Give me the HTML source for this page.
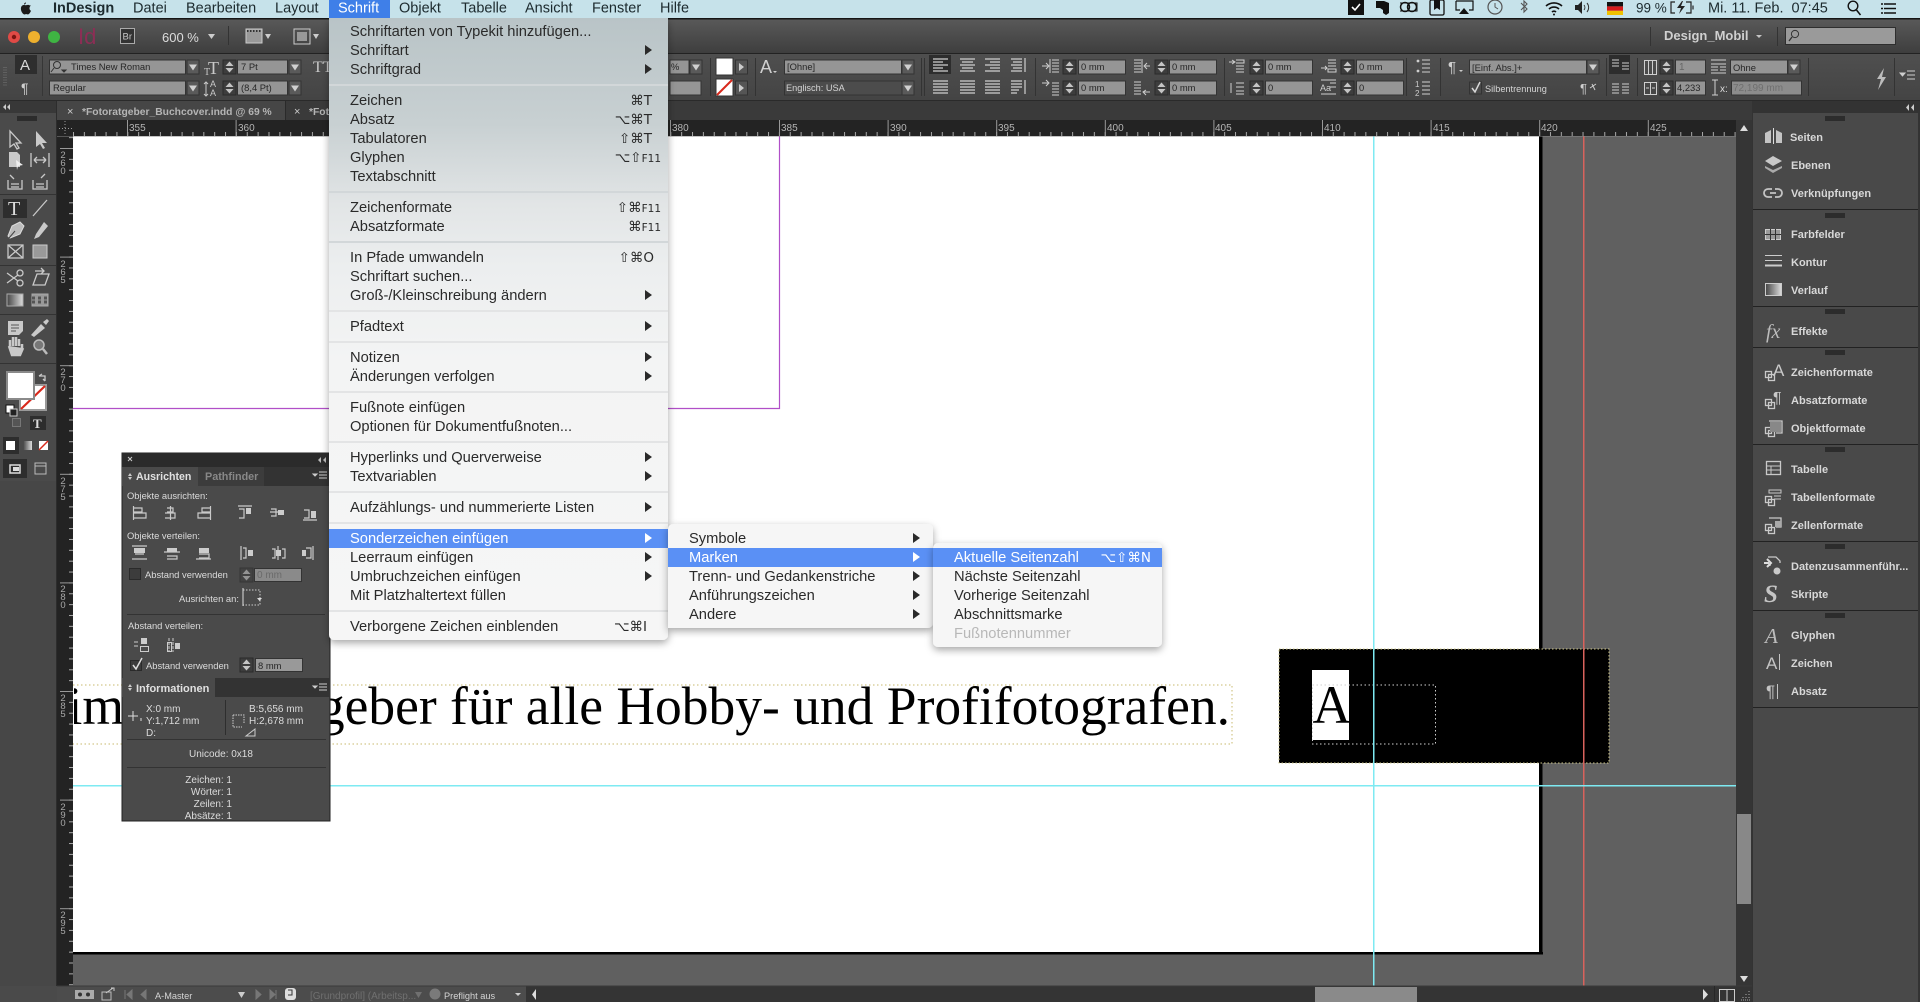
<!DOCTYPE html>
<html lang="de"><head><meta charset="utf-8"><title>InDesign</title>
<style>
html,body{margin:0;padding:0;background:#4a4a4a;overflow:hidden}
svg{display:block}
text{font-family:"Liberation Sans","DejaVu Sans",sans-serif}
.mb{font-size:14.5px;fill:#1c2a2e}
.m{font-size:14.7px;fill:#2a2a2a}
.w{font-size:14.7px;fill:#fff}
.k{font-size:13.5px;fill:#2a2a2a;text-anchor:end;font-family:"DejaVu Sans","Liberation Sans",sans-serif}
.c{font-size:9.4px;fill:#262626}
.l{font-size:10px;fill:#dcdcdc}
.l2{font-size:9.4px;fill:#dcdcdc}
.p{font-size:9.2px;fill:#d5d5d5}
.b{font-size:11px;font-weight:bold;fill:#d8d8d8}
.r{font-size:10px;fill:#b5b5b5}
.v{font-size:9.5px;fill:#a8a8a8;text-anchor:middle}
.ic{fill:none;stroke:#c9c9c9;stroke-width:1.3}
.if{fill:#c9c9c9}
.lh{stroke:#c9c9c9;stroke-width:1.2;fill:none}
</style></head>
<body>
<svg xmlns="http://www.w3.org/2000/svg" width="1920" height="1002" viewBox="0 0 1920 1002">
<defs>
<linearGradient id="gm" x1="0" y1="18" x2="0" y2="640" gradientUnits="userSpaceOnUse">
<stop offset="0" stop-color="#b9c4c7"/><stop offset=".17" stop-color="#c8d0d2"/><stop offset=".3" stop-color="#e2e5e6"/><stop offset=".4" stop-color="#eceeef"/><stop offset=".55" stop-color="#f3f4f4"/><stop offset="1" stop-color="#f6f6f6"/>
</linearGradient>
<linearGradient id="gt" x1="0" y1="0" x2="0" y2="1"><stop offset="0" stop-color="#5a5a5a"/><stop offset="1" stop-color="#3e3e3e"/></linearGradient>
<linearGradient id="gc" x1="0" y1="0" x2="0" y2="1"><stop offset="0" stop-color="#4f4f4f"/><stop offset="1" stop-color="#444"/></linearGradient>
<linearGradient id="gg" x1="0" y1="0" x2="1" y2="0"><stop offset="0" stop-color="#444"/><stop offset="1" stop-color="#ddd"/></linearGradient>
<filter id="sh" x="-10%" y="-10%" width="120%" height="120%"><feDropShadow dx="0" dy="3" stdDeviation="4" flood-color="#000" flood-opacity=".35"/></filter>
<pattern id="rh" x="73" y="120" width="10.86" height="16" patternUnits="userSpaceOnUse"><rect x="0" y="12" width="1" height="4" fill="#a8a8a8"/></pattern>
<pattern id="rv" x="58" y="148" width="15" height="10.86" patternUnits="userSpaceOnUse"><rect x="11" y="0" width="4" height="1" fill="#a8a8a8"/></pattern>
<g id="st"><rect width="13" height="14" fill="#3d3d3d" stroke="#2a2a2a"/><path d="M6.500 1.500l4 4.500h-8zM6.500 12.500l4-4.500h-8z" fill="#c4c4c4"/></g>
<g id="dd"><rect width="12" height="14" fill="#5a5a5a" stroke="#333"/><path d="M2 4.500h8l-4 6z" fill="#d0d0d0"/></g>
<g id="gr"><path d="M0 0v5M2 0v5M4 0v5M6 0v5M8 0v5M10 0v5M12 0v5M14 0v5M16 0v5M18 0v5" stroke="#151515" stroke-width="1.100"/></g>
<g id="al"><path d="M0 0h15M0 3h10M0 6h15M0 9h10M0 12h15" stroke="#cfcfcf" stroke-width="1.200"/></g>
<g id="al2"><path d="M0 0h15M0 3h15M0 6h15M0 9h15M0 12h15" stroke="#cfcfcf" stroke-width="1.200"/></g>
<g id="ml"><path d="M0 0h7M0 3h7M0 6h7M0 9h7M0 12h7" stroke="#cfcfcf"/></g>
</defs>

<!-- base -->
<rect width="1920" height="1002" fill="#4a4a4a"/>
<!-- top bands -->
<rect y="18" width="1920" height="35" fill="url(#gt)"/>
<rect y="18" width="1920" height="1.500" fill="#161616"/>
<rect y="53" width="1920" height="1" fill="#222"/>
<rect y="54" width="1920" height="46" fill="url(#gc)"/>
<rect y="100" width="1920" height="1" fill="#2a2a2a"/>
<rect y="101" width="1920" height="19" fill="#3a3a3a"/>

<!-- canvas -->
<rect x="57" y="120" width="1680" height="866" fill="#606060"/>
<rect x="73" y="136" width="1466" height="816" fill="#fff"/>
<rect x="1539" y="136" width="3.500" height="818" fill="#000"/>
<rect x="73" y="952" width="1470" height="2.500" fill="#000"/>

<!-- guides and lines -->
<path d="M779.500 136V408.500H73" fill="none" stroke="#b14fc8" stroke-width="1.200"/>

<!-- big text -->
<svg x="74" y="670" width="1200" height="80" viewBox="74 670 1200 80">
<text x="124" y="724" text-anchor="end" font-size="53.500" style="font-family:'Liberation Serif',serif" fill="#000">im</text>
<text x="1230" y="724" text-anchor="end" font-size="53.500" style="font-family:'Liberation Serif',serif" fill="#000">Fotoratgeber für alle Hobby- und Profifotografen.</text>
</svg>
<path d="M73 685H1232V744H73" fill="none" stroke="#c8ba6e" stroke-width="1" stroke-dasharray="1.500 2.500"/>

<!-- black frame -->
<rect x="1279" y="649" width="330" height="114" fill="#000"/>
<rect x="1279" y="649" width="330" height="114" fill="none" stroke="#cfc98a" stroke-width="1" stroke-dasharray="1.500 2"/>
<rect x="1312" y="670" width="37" height="70" fill="#fff"/>
<text x="1312.500" y="723" font-size="53.500" style="font-family:'Liberation Serif',serif" fill="#000">A</text>
<rect x="1312.500" y="685" width="123" height="59" fill="none" stroke="#cfcfcf" stroke-width="1" stroke-dasharray="1.500 2.500"/>

<rect x="1583" y="136" width="1.500" height="850" fill="#d8625c"/>
<rect x="1373" y="136" width="1.500" height="850" fill="#7eeaf2"/>
<rect x="73" y="785" width="1663" height="1.500" fill="#7eeaf2"/>

<!-- rulers -->
<rect x="57" y="120" width="1680" height="16" fill="#232323"/>
<rect x="73" y="120" width="1663" height="16" fill="url(#rh)"/>
<rect x="57" y="136" width="16" height="850" fill="#232323"/>
<rect x="58" y="136" width="15" height="850" fill="url(#rv)"/>
<rect x="57" y="136" width="1680" height="1" fill="#8a8a8a" opacity=".5"/>
<path d="M59 128.500h14M65 121v15" stroke="#999" stroke-dasharray="1 2"/>
<g fill="#9a9a9a">
<rect x="127" y="120" width="1" height="16"/><rect x="235.600" y="120" width="1" height="16"/><rect x="344.200" y="120" width="1" height="16"/><rect x="670" y="120" width="1" height="16"/><rect x="779" y="120" width="1" height="16"/><rect x="887.600" y="120" width="1" height="16"/><rect x="996.200" y="120" width="1" height="16"/><rect x="1104.800" y="120" width="1" height="16"/><rect x="1213.400" y="120" width="1" height="16"/><rect x="1322" y="120" width="1" height="16"/><rect x="1430.600" y="120" width="1" height="16"/><rect x="1539.200" y="120" width="1" height="16"/><rect x="1647.800" y="120" width="1" height="16"/>
<rect x="60" y="148" width="13" height="1"/><rect x="60" y="256.600" width="13" height="1"/><rect x="60" y="365.200" width="13" height="1"/><rect x="60" y="473.800" width="13" height="1"/><rect x="60" y="582.400" width="13" height="1"/><rect x="60" y="691" width="13" height="1"/><rect x="60" y="799.600" width="13" height="1"/><rect x="60" y="908.200" width="13" height="1"/>
</g>
<g>
<text class="r" x="129" y="131">355</text><text class="r" x="238" y="131">360</text><text class="r" x="672" y="131">380</text><text class="r" x="781" y="131">385</text><text class="r" x="890" y="131">390</text><text class="r" x="998" y="131">395</text><text class="r" x="1107" y="131">400</text><text class="r" x="1215" y="131">405</text><text class="r" x="1324" y="131">410</text><text class="r" x="1433" y="131">415</text><text class="r" x="1541" y="131">420</text><text class="r" x="1650" y="131">425</text>
</g>
<g>
<text class="v" x="63" y="158">2</text><text class="v" x="63" y="166">6</text><text class="v" x="63" y="174">0</text>
<text class="v" x="63" y="267">2</text><text class="v" x="63" y="275">6</text><text class="v" x="63" y="283">5</text>
<text class="v" x="63" y="375">2</text><text class="v" x="63" y="383">7</text><text class="v" x="63" y="391">0</text>
<text class="v" x="63" y="484">2</text><text class="v" x="63" y="492">7</text><text class="v" x="63" y="500">5</text>
<text class="v" x="63" y="592">2</text><text class="v" x="63" y="600">8</text><text class="v" x="63" y="608">0</text>
<text class="v" x="63" y="701">2</text><text class="v" x="63" y="709">8</text><text class="v" x="63" y="717">5</text>
<text class="v" x="63" y="810">2</text><text class="v" x="63" y="818">9</text><text class="v" x="63" y="826">0</text>
<text class="v" x="63" y="918">2</text><text class="v" x="63" y="926">9</text><text class="v" x="63" y="934">5</text>
</g>

<!-- tabs -->
<rect x="57" y="101" width="228" height="19" fill="#464646"/>
<rect x="285" y="101" width="1" height="19" fill="#2a2a2a"/>
<text x="67" y="115" font-size="11" fill="#ccc">×</text>
<text x="82" y="115" font-size="10.300" font-weight="bold" fill="#b5b5b5">*Fotoratgeber_Buchcover.indd @ 69 %</text>
<text x="294" y="115" font-size="11" fill="#ccc">×</text>
<text x="309" y="115" font-size="10.300" font-weight="bold" fill="#b5b5b5">*Fotoratgeber</text>

<!-- top strip controls -->
<circle cx="14" cy="37" r="6" fill="#e04a46"/><circle cx="14" cy="37" r="2.200" fill="#7a1512"/>
<circle cx="34" cy="37" r="6" fill="#eeb02e"/><circle cx="54" cy="37" r="6" fill="#3fb543"/>
<text x="78" y="44" font-size="22" fill="#8c2e55">Id</text>
<rect x="120.500" y="28.500" width="14" height="15" fill="#333" stroke="#aaa"/><text x="122.500" y="39.500" font-size="9.500" fill="#c8c8c8">Br</text>
<text x="162" y="42" font-size="13" fill="#dcdcdc">600 %</text>
<path d="M208 34h7l-3.500 5z" fill="#ccc"/>
<rect x="228" y="26" width="1" height="19" fill="#333"/>
<rect x="246" y="29" width="16" height="14" fill="#999" stroke="#ccc"/><path d="M247 31h14" stroke="#333" stroke-dasharray="1.500 1.500" stroke-width="2"/><path d="M265 34h6l-3 5z" fill="#ccc"/>
<rect x="294" y="29" width="16" height="15" fill="none" stroke="#ccc"/><rect x="297" y="32" width="10" height="9" fill="#999"/><path d="M313 34h6l-3 5z" fill="#ccc"/>

<!-- control row left -->
<path d="M4 67v20M6 67v20" stroke="#777" stroke-dasharray="1 1.500"/>
<rect x="15" y="55" width="22" height="19" fill="#2e2e2e"/>
<text x="20" y="70" font-size="15" fill="#d8d8d8">A</text>
<text x="21" y="93" font-size="14" fill="#cfcfcf">¶</text>
<rect x="42" y="56" width="1" height="40" fill="#363636"/>
<rect x="49.500" y="60" width="136" height="14" fill="#959595" stroke="#333"/>
<circle cx="57" cy="65" r="3.500" fill="none" stroke="#333"/><path d="M54 68l-3 4M62 70h4l-2 2z" stroke="#333" fill="#333"/>
<text x="71" y="70" class="c">Times New Roman</text>
<use href="#dd" x="187" y="60"/>
<rect x="49.500" y="81" width="136" height="14" fill="#959595" stroke="#333"/>
<text x="53" y="91" class="c">Regular</text>
<use href="#dd" x="187" y="81"/>
<text x="204" y="75" font-size="10" fill="#c9c9c9" style="font-family:'Liberation Serif',serif">T</text>
<text x="208" y="74" font-size="18" fill="#c9c9c9" style="font-family:'Liberation Serif',serif">T</text>
<text x="210" y="87" font-size="9" fill="#c9c9c9">A</text>
<text x="210" y="96" font-size="9" fill="#c9c9c9">A</text>
<path d="M206 82v14M204 84l2-2 2 2M204 94l2 2 2-2" stroke="#c9c9c9" fill="none"/>
<use href="#st" x="223" y="60"/><rect x="237.500" y="60" width="50" height="14" fill="#959595" stroke="#333"/><text x="241" y="70" class="c">7 Pt</text><use href="#dd" x="289" y="60"/>
<use href="#st" x="223" y="81"/><rect x="237.500" y="81" width="50" height="14" fill="#959595" stroke="#333"/><text x="241" y="91" class="c">(8,4 Pt)</text><use href="#dd" x="289" y="81"/>
<text x="313" y="72" font-size="16" fill="#c9c9c9" style="font-family:'Liberation Serif',serif">TT</text>

<!-- control middle -->
<rect x="670" y="60" width="19" height="14" fill="#959595" stroke="#333"/><text x="671" y="70" class="c">%</text><use href="#dd" x="690" y="60"/>
<rect x="670" y="81" width="31" height="14" fill="#959595" stroke="#333"/>
<rect x="710" y="58" width="1" height="38" fill="#333"/>
<rect x="716" y="58" width="17" height="17" fill="#fff" stroke="#333"/>
<rect x="735.500" y="60" width="12" height="14" fill="#555" stroke="#333"/><path d="M739 63v8l5-4z" fill="#ccc"/>
<rect x="716" y="79" width="17" height="17" fill="#fff" stroke="#333"/><path d="M717 95l15-15" stroke="#d8291c" stroke-width="2"/>
<rect x="735.500" y="81" width="12" height="14" fill="#555" stroke="#333"/><path d="M739 84v8l5-4z" fill="#ccc"/>
<rect x="755" y="58" width="1" height="38" fill="#333"/>
<text x="760" y="73" font-size="18" fill="#cfcfcf">A</text><path d="M773 71h4l-2 2z" fill="#ccc"/>
<rect x="784.500" y="60" width="117" height="14" fill="#959595" stroke="#333"/><text x="787" y="70" class="c">[Ohne]</text><use href="#dd" x="902" y="60"/>
<rect x="784.500" y="81" width="129" height="14" fill="#4c4c4c" stroke="#333"/><text x="786" y="91" class="p">Englisch: USA</text><use href="#dd" x="902" y="81"/>
<rect x="921" y="58" width="1" height="38" fill="#333"/><rect x="924" y="58" width="1" height="38" fill="#333"/>
<rect x="929" y="55" width="22" height="19" fill="#2d2d2d"/>
<use href="#al" x="933" y="59"/>
<path d="M960 59h15M962 62h11M960 65h15M962 68h11M960 71h15" stroke="#cfcfcf" stroke-width="1.200"/>
<path d="M985 59h15M990 62h10M985 65h15M990 68h10M985 71h15" stroke="#cfcfcf" stroke-width="1.200"/>
<path d="M1011 59h11M1013 62h9M1011 65h11M1013 68h9M1011 71h11M1025 58v14" stroke="#cfcfcf" stroke-width="1.200"/>
<use href="#al2" x="933" y="81"/><use href="#al2" x="960" y="81"/><use href="#al2" x="985" y="81"/>
<path d="M1011 81h11M1011 84h11M1011 87h11M1011 90h8M1011 93h6M1025 80v14" stroke="#cfcfcf" stroke-width="1.200"/>
<rect x="1035" y="58" width="1" height="38" fill="#333"/>

<path d="M1042 66h6M1046 63l3 3-3 3M1050 59v14" stroke="#cfcfcf" fill="none"/><use href="#ml" x="1052" y="60"/>
<path d="M1042 83h6M1046 80l3 3-3 3" stroke="#cfcfcf" fill="none"/><use href="#ml" x="1052" y="83"/>
<use href="#st" x="1063" y="60"/><rect x="1078.500" y="60" width="47" height="14" fill="#959595" stroke="#333"/><text x="1081" y="70" class="c">0 mm</text>
<use href="#st" x="1063" y="81"/><rect x="1078.500" y="81" width="47" height="14" fill="#959595" stroke="#333"/><text x="1081" y="91" class="c">0 mm</text>
<use href="#ml" x="1134" y="60"/><path d="M1142 59v14M1150 66h-5M1147 63l-3 3 3 3" stroke="#cfcfcf" fill="none"/>
<use href="#ml" x="1134" y="82"/><path d="M1150 92h-6M1146 90l-3 2 3 3" stroke="#cfcfcf" fill="none"/>
<use href="#st" x="1155" y="60"/><rect x="1169.500" y="60" width="47" height="14" fill="#959595" stroke="#333"/><text x="1172" y="70" class="c">0 mm</text>
<use href="#st" x="1155" y="81"/><rect x="1169.500" y="81" width="47" height="14" fill="#959595" stroke="#333"/><text x="1172" y="91" class="c">0 mm</text>
<rect x="1224" y="58" width="1" height="38" fill="#333"/>
<path d="M1229 62h5M1232 60l3 2-3 2M1236 60h8v3h-8M1236 66h8M1236 69h8M1236 72h8" stroke="#cfcfcf" fill="none"/>
<path d="M1231 83v10M1236 83h8M1236 87h8M1236 91h8M1236 94h8" stroke="#cfcfcf" fill="none"/>
<use href="#st" x="1250" y="60"/><rect x="1265.500" y="60" width="47" height="14" fill="#959595" stroke="#333"/><text x="1268" y="70" class="c">0 mm</text>
<use href="#st" x="1250" y="81"/><rect x="1265.500" y="81" width="47" height="14" fill="#959595" stroke="#333"/><text x="1268" y="91" class="c">0</text>
<path d="M1321 68h6M1325 66l2 2-2 2M1328 60h8M1328 63h8M1328 66h8M1328 69h8v3h-8z" stroke="#cfcfcf" fill="none"/>
<text x="1320" y="91" font-size="9" fill="#cfcfcf">Aa</text><path d="M1321 80h15M1330 83h6M1330 87h6M1321 94h15" stroke="#cfcfcf"/>
<use href="#st" x="1341" y="60"/><rect x="1356.500" y="60" width="47" height="14" fill="#959595" stroke="#333"/><text x="1359" y="70" class="c">0 mm</text>
<use href="#st" x="1341" y="81"/><rect x="1356.500" y="81" width="47" height="14" fill="#959595" stroke="#333"/><text x="1359" y="91" class="c">0</text>
<rect x="1406" y="58" width="1" height="38" fill="#333"/>
<path d="M1422 60h8M1422 64h8M1422 68h8M1422 72h8" stroke="#cfcfcf"/><circle cx="1418" cy="61" r="1.400" fill="#cfcfcf"/><circle cx="1418" cy="71" r="1.400" fill="#cfcfcf"/>
<text x="1415" y="87" font-size="8" fill="#cfcfcf">1</text><text x="1415" y="96" font-size="8" fill="#cfcfcf">2</text>
<path d="M1422 82h8M1422 86h8M1422 90h8M1422 94h8" stroke="#cfcfcf"/>
<rect x="1440" y="58" width="1" height="38" fill="#333"/>
<text x="1448" y="72" font-size="15" fill="#cfcfcf">¶</text><path d="M1459 70h4l-2 2z" fill="#ccc"/>
<rect x="1469.500" y="60" width="117" height="14" fill="#959595" stroke="#333"/><text x="1472" y="71" class="c">[Einf. Abs.]+</text><use href="#dd" x="1587" y="60"/>
<rect x="1469.500" y="82" width="12" height="12" fill="#4a4a4a" stroke="#333"/><path d="M1472 88l3 4 5-10" stroke="#d8d8d8" stroke-width="1.500" fill="none"/>
<text x="1485" y="92" class="p">Silbentrennung</text>
<text x="1580" y="93" font-size="13" fill="#cfcfcf">¶</text><path d="M1590 88l6-4M1592 84l3 6" stroke="#cfcfcf"/>
<rect x="1606" y="58" width="1" height="38" fill="#333"/>
<rect x="1609" y="55" width="21" height="19" fill="#2d2d2d"/>
<path d="M1612 60h7M1612 63h7M1612 66h7M1622 63h7M1622 66h7M1622 69h7" stroke="#cfcfcf"/>
<path d="M1612 84h7M1612 87h7M1612 90h7M1612 93h7M1622 84h7M1622 87h7M1622 90h7M1622 93h7" stroke="#cfcfcf"/>
<rect x="1637" y="58" width="1" height="38" fill="#333"/>
<rect x="1644.500" y="60.500" width="12" height="14" fill="none" stroke="#cfcfcf"/><path d="M1648.500 60v14M1652.500 60v14" stroke="#cfcfcf"/>
<rect x="1644.500" y="82.500" width="12" height="12" fill="none" stroke="#cfcfcf"/><path d="M1650.500 82v12M1646 88h3M1652 88h3" stroke="#cfcfcf"/>
<use href="#st" x="1660" y="60"/><rect x="1675.500" y="60" width="30" height="14" fill="#959595" stroke="#333"/><text x="1679" y="70" font-size="10" fill="#666">1</text>
<use href="#st" x="1660" y="81"/><rect x="1675.500" y="81" width="30" height="14" fill="#959595" stroke="#333"/><text x="1677" y="91" class="c">4,233</text>
<path d="M1711 60h15M1711 64h15M1711 67h7M1720 67h6M1711 70h7M1720 70h6M1711 73h15" stroke="#cfcfcf"/>
<path d="M1712 80h6M1715 80v15M1712 95h6" stroke="#cfcfcf" fill="none"/><text x="1720" y="92" class="l">x:</text>
<rect x="1730.500" y="60" width="57" height="14" fill="#959595" stroke="#333"/><text x="1733" y="71" class="c">Ohne</text><use href="#dd" x="1788" y="60"/>
<rect x="1731.500" y="81" width="70" height="14" fill="#8c8c8c" stroke="#333"/><text x="1733" y="91" font-size="10" fill="#6f6f6f">72,199 mm</text>
<rect x="1808" y="58" width="1" height="38" fill="#333"/>
<path d="M1884 68l-7 11h4l-3 11 8-13h-4z" fill="#bcbcbc"/>
<rect x="1894" y="58" width="1" height="38" fill="#333"/>
<path d="M1900 73h5l-2.500 3zM1907 71h8M1907 75h8M1907 79h8" stroke="#cfcfcf" fill="#cfcfcf"/>

<!-- workspace -->
<rect x="1650" y="27" width="1" height="19" fill="#333"/>
<text x="1664" y="40" font-size="13" font-weight="bold" fill="#d0d0d0">Design_Mobil</text>
<path d="M1756 35h6l-3 3z" fill="#c5c5c5"/>
<rect x="1777" y="27" width="1" height="19" fill="#333"/>
<rect x="1785.500" y="27.500" width="110" height="17" fill="#9a9a9a" stroke="#2e2e2e"/>
<circle cx="1795" cy="34" r="3.600" fill="none" stroke="#333"/><path d="M1792 37l-3 4" stroke="#333" stroke-width="1.300"/>

<!-- tool panel -->
<rect x="0" y="113" width="56" height="368" fill="#4a4a4a"/>
<rect x="0" y="101" width="57" height="12" fill="#383838"/>
<rect x="56" y="101" width="1" height="885" fill="#2d2d2d"/>
<rect x="0" y="481" width="56" height="505" fill="#474747"/>
<path d="M6 104l-3 3 3 3zM10 104l-3 3 3 3z" fill="#ccc"/>
<use href="#gr" x="18" y="116"/>
<path d="M10 131v16l4-3 3 5 2-1-3-5h5z" class="ic"/><path d="M36 131v16l4-3 3 5 2-1-3-5h5z" class="if"/>
<path d="M9 152h8l3 3v12h-11z" class="if"/><path d="M16 160l7 5-5 1 -1 4z" fill="#eee"/>
<path d="M31 153v14M49 153v14M34 160h12M34 160l3-3M34 160l3 3M46 160l-3-3M46 160l-3 3" class="ic"/>
<path d="M8 180v9h14v-9M11 184h8M11 187h8M10 175l4 4" class="ic"/><path d="M33 180v9h14v-9M36 184h8M36 187h8M45 174l-4 4" class="ic"/>
<rect x="0" y="194" width="56" height="1" fill="#333"/>
<rect x="3" y="199" width="24" height="19" fill="#2d2d2d"/>
<text x="8" y="215" font-size="20" fill="#ddd" style="font-family:'Liberation Serif',serif">T</text>
<path d="M33 216l14-16" class="ic"/>
<path d="M20 222l4 4-4 8-10 4-2-2 4-10z" fill="#bcbcbc" stroke="#ddd"/><path d="M9 238l6-7" stroke="#444"/>
<path d="M44 222l4 4-9 11-5 2 2-5z" class="if"/>
<rect x="8" y="245" width="15" height="13" class="ic"/><path d="M8 245l15 13M23 245l-15 13" class="ic"/>
<rect x="33" y="245" width="14" height="13" fill="#999" stroke="#ccc"/>
<rect x="0" y="265" width="56" height="1" fill="#333"/>
<circle cx="20" cy="273" r="3" class="ic"/><circle cx="20" cy="283" r="3" class="ic"/><path d="M7 273l11 8M7 283l11-8" class="ic"/>
<path d="M33 285l4-11h12l-4 11zM35 271h9M41 268l3 3-3 3" class="ic"/>
<rect x="7" y="294" width="16" height="12" fill="url(#gg)" stroke="#aaa"/>
<rect x="32" y="294" width="16" height="12" fill="#999" stroke="#aaa"/><path d="M32 298h16M32 302h16" stroke="#555" stroke-dasharray="3 3" stroke-width="3"/>
<rect x="0" y="314" width="56" height="1" fill="#333"/>
<path d="M8 321h15v10l-4 4h-11z" class="if"/><path d="M11 325h8M11 328h8M11 331h5" stroke="#555"/>
<path d="M31 335l10-11 4 4-11 9zM43 322l4-3 2 2-3 4" class="if"/>
<path d="M10 346v-6M13 346v-9M16 346v-9M19 346v-7M22 349v-5M9 346l3 9h8l3-7" stroke="#c9c9c9" stroke-width="2.500" fill="#c9c9c9"/>
<circle cx="39" cy="345" r="5" fill="#777" stroke="#bbb" stroke-width="1.500"/><path d="M43 349l4 5" stroke="#bbb" stroke-width="2.500"/>
<rect x="0" y="363" width="56" height="1" fill="#333"/>
<rect x="20" y="385" width="26" height="25" fill="#fff" stroke="#999" stroke-width="2"/><path d="M21 409l24-23" stroke="#d8291c" stroke-width="2.200"/>
<rect x="7" y="372" width="27" height="27" fill="#fff" stroke="#8a8a8a" stroke-width="2"/>
<path d="M39 376h6v5M39 376l3-2M45 381l-2-2" class="ic"/>
<rect x="6" y="405" width="8" height="8" fill="#fff" stroke="#111"/><rect x="10" y="409" width="7" height="7" fill="#222" stroke="#ccc"/>
<rect x="12.500" y="418.500" width="8" height="8" fill="#555" stroke="#777"/>
<rect x="30" y="416" width="16" height="14" fill="#2d2d2d"/><text x="33" y="428" font-size="13" font-weight="bold" fill="#ddd" style="font-family:'Liberation Serif',serif">T</text>
<rect x="3" y="437" width="16" height="17" fill="#2d2d2d"/><rect x="6" y="441" width="9" height="9" fill="#fff"/>
<rect x="23" y="441" width="9" height="9" fill="url(#gg)"/>
<rect x="39" y="441" width="9" height="9" fill="#fff"/><path d="M39 450l9-9" stroke="#d8291c" stroke-width="1.500"/>
<rect x="3" y="459" width="24" height="19" fill="#2d2d2d"/><rect x="10" y="465" width="10" height="8" fill="none" stroke="#ddd" stroke-width="1.500"/><rect x="13" y="467" width="6" height="4" fill="#ddd"/>
<rect x="35" y="463" width="11" height="11" fill="none" stroke="#bbb"/><path d="M35 466h11" stroke="#bbb"/>

<!-- vertical scrollbar -->
<rect x="1736" y="120" width="16" height="866" fill="#353535"/>
<rect x="1737" y="814" width="14" height="90" fill="#888"/>
<path d="M1744 125l4 6h-8z" fill="#ddd"/><path d="M1740 976h8l-4 6z" fill="#ddd"/>

<!-- status bar -->
<rect x="57" y="986" width="469" height="16" fill="#4c4c4c"/>
<rect x="526" y="986" width="1226" height="16" fill="#343434"/>
<rect x="57" y="985.500" width="1695" height="1" fill="#3a3a3a"/>
<rect x="75" y="990" width="19" height="9" fill="#aaa"/><circle cx="80" cy="994.500" r="2" fill="#333"/><circle cx="88" cy="994.500" r="2" fill="#333"/>
<rect x="102" y="992" width="9" height="8" fill="none" stroke="#bbb"/><path d="M106 993l7-5M111 988h3v3" stroke="#ccc" fill="none"/>
<path d="M125 990v9M132 990v9l-5-4.500zM146 990v9l-5-4.500z" stroke="#777" fill="#777"/>
<text x="155" y="999" class="p">A-Master</text>
<path d="M238 992h7l-3.500 6z" fill="#ccc"/>
<path d="M256 990v9l5-4.500zM270 990v9l5-4.500zM276 990v9" stroke="#777" fill="#777"/>
<rect x="285" y="988" width="11" height="12" rx="3" fill="#ddd"/><path d="M288 990h4v5h-4" stroke="#333" fill="none"/>
<text x="310" y="999" font-size="10" fill="#707070">[Grundprofil] (Arbeitsp...</text>
<path d="M415 992h7l-3.500 6z" fill="#707070"/>
<circle cx="435" cy="994" r="5.500" fill="#7a7a7a"/>
<text x="444" y="999" class="p">Preflight aus</text>
<path d="M515 993h6l-3 3z" fill="#ccc"/>
<path d="M536 989v11l-4-5.500z" fill="#ddd"/>
<rect x="1315" y="987" width="102" height="15" fill="#8a8a8a"/>
<path d="M1703 989v11l5-5.500z" fill="#ddd"/>
<rect x="1714" y="986" width="1" height="16" fill="#272727"/>
<rect x="1719.500" y="989.500" width="15" height="12" fill="none" stroke="#ccc"/><path d="M1727 989v12" stroke="#ccc"/>
<path d="M1749 991v1M1746 994v1M1749 994v1M1743 997v1M1746 997v1M1749 997v1M1741 1000h9" stroke="#aaa" stroke-dasharray="1 1"/>

<!-- right panel -->
<rect x="1752" y="101" width="168" height="901" fill="#333"/>
<rect x="1753" y="113" width="165" height="889" fill="#494949"/>
<path d="M1914 104l-3 3.500 3 3.500zM1909 104l-3 3.500 3 3.500z" fill="#ccc"/>
<g fill="#222">
<rect x="1753" y="209" width="165" height="1"/><rect x="1753" y="306" width="165" height="1"/><rect x="1753" y="347" width="165" height="1"/><rect x="1753" y="444" width="165" height="1"/><rect x="1753" y="541" width="165" height="1"/><rect x="1753" y="610" width="165" height="1"/><rect x="1753" y="707" width="165" height="1"/>
</g>
<use href="#gr" x="1826" y="116"/><use href="#gr" x="1826" y="213"/><use href="#gr" x="1826" y="309"/><use href="#gr" x="1826" y="350"/><use href="#gr" x="1826" y="447"/><use href="#gr" x="1826" y="544"/><use href="#gr" x="1826" y="613"/>
<text class="b" x="1790" y="141">Seiten</text><text class="b" x="1791" y="169">Ebenen</text><text class="b" x="1791" y="197">Verknüpfungen</text>
<text class="b" x="1791" y="238">Farbfelder</text><text class="b" x="1791" y="266">Kontur</text><text class="b" x="1791" y="294">Verlauf</text>
<text class="b" x="1791" y="335">Effekte</text>
<text class="b" x="1791" y="376">Zeichenformate</text><text class="b" x="1791" y="404">Absatzformate</text><text class="b" x="1791" y="432">Objektformate</text>
<text class="b" x="1791" y="473">Tabelle</text><text class="b" x="1791" y="501">Tabellenformate</text><text class="b" x="1791" y="529">Zellenformate</text>
<text class="b" x="1791" y="570">Datenzusammenführ...</text><text class="b" x="1791" y="598">Skripte</text>
<text class="b" x="1791" y="639">Glyphen</text><text class="b" x="1791" y="667">Zeichen</text><text class="b" x="1791" y="695">Absatz</text>
<!-- right icons -->
<path d="M1765 133l6-3v13h-6zM1782 133l-6-3v13h6z" fill="#c4c4c4"/><path d="M1773.500 128v16" stroke="#ddd"/>
<path d="M1773 156l9 5-9 5-8-5z" class="if"/><path d="M1765 166l8 4 9-4 0 2-9 5-8-5z" fill="#aaa"/>
<path d="M1772 189h-4a4 4 0 0 0 0 8h4M1775 189h3a4 4 0 0 1 0 8h-3M1770 193h6" fill="none" stroke="#c4c4c4" stroke-width="1.800"/>
<rect x="1765.500" y="229.500" width="15" height="10" fill="#999" stroke="#ccc"/><path d="M1770.500 229v11M1775.500 229v11M1765 234.500h16" stroke="#333"/>
<path d="M1765 255.500h17M1765 260.500h17" stroke="#ccc"/><path d="M1765 265.500h17" stroke="#ccc" stroke-width="2"/>
<rect x="1765.500" y="283.500" width="16" height="12" fill="url(#gg)" stroke="#ccc"/>
<text x="1766" y="338" font-size="20" font-style="italic" fill="#bcbcbc" style="font-family:'Liberation Serif',serif">fx</text>
<rect x="1765.500" y="371.500" width="6" height="6" class="ic"/><rect x="1768.500" y="374.500" width="6" height="6" class="ic"/><text x="1773" y="376" font-size="17" fill="#c9c9c9">A</text>
<rect x="1765.500" y="399.500" width="6" height="6" class="ic"/><rect x="1768.500" y="402.500" width="6" height="6" class="ic"/><text x="1773" y="403" font-size="16" fill="#c9c9c9">¶</text>
<rect x="1765.500" y="427.500" width="6" height="6" class="ic"/><rect x="1768.500" y="430.500" width="6" height="6" class="ic"/><path d="M1769 421h13v12h-6" class="ic"/><rect x="1770" y="422" width="11" height="10" fill="#888"/>
<rect x="1766.500" y="461.500" width="14" height="13" class="ic"/><path d="M1766 466h15M1766 470h15M1771 466v9" stroke="#c9c9c9"/>
<rect x="1765.500" y="496.500" width="6" height="6" class="ic"/><rect x="1768.500" y="499.500" width="6" height="6" class="ic"/><path d="M1769 490h12v3h-12zM1774 496h7M1774 499h7" stroke="#c9c9c9" fill="none"/>
<rect x="1765.500" y="524.500" width="6" height="6" class="ic"/><rect x="1768.500" y="527.500" width="6" height="6" class="ic"/><path d="M1769 518h12v9h-5" class="ic"/><rect x="1775" y="521" width="6" height="6" fill="#aaa"/>
<path d="M1768 557h8l4 4v2M1770 566v-3" class="ic"/><path d="M1764 563h5M1767 559l4 4-4 4" stroke="#ddd" stroke-width="2" fill="none"/><circle cx="1777" cy="571" r="3.500" fill="#c9c9c9"/>
<text x="1764" y="602" font-size="25" font-weight="bold" font-style="italic" fill="#c4c4c4" style="font-family:'Liberation Serif',serif">S</text>
<text x="1765" y="643" font-size="21" font-style="italic" fill="#bcbcbc" style="font-family:'Liberation Serif',serif">A</text>
<text x="1766" y="669" font-size="17" fill="#c4c4c4">A</text><path d="M1779.500 654v16" stroke="#c4c4c4"/>
<text x="1766" y="697" font-size="17" fill="#c4c4c4">¶</text><path d="M1777.500 684v15" stroke="#c4c4c4"/>

<!-- floating panel -->
<rect x="122" y="453" width="208" height="368" fill="#4a4a4a" stroke="#222"/>
<rect x="122" y="453" width="208" height="14" fill="#2b2b2b"/>
<path d="M128 457l4 4M132 457l-4 4" stroke="#ccc"/>
<path d="M321 457l-3 3 3 3zM326 457l-3 3 3 3z" fill="#bbb"/>
<rect x="122" y="467" width="208" height="19" fill="#333"/>
<rect x="122" y="467" width="76" height="19" fill="#4a4a4a"/>
<rect x="198" y="467" width="66" height="19" fill="#3c3c3c"/>
<path d="M130 473l-2 3h4zM130 480l-2-3h4z" fill="#ccc"/>
<text x="136" y="480" font-size="10.600" font-weight="bold" fill="#e0e0e0">Ausrichten</text>
<text x="205" y="480" font-size="10.800" font-weight="bold" fill="#888">Pathfinder</text>
<path d="M313 474h4l-2 2zM319 472h8M319 475h8M319 478h8" stroke="#ccc" fill="#ccc"/>
<text class="l2" x="127" y="499">Objekte ausrichten:</text>
<path d="M133.500 506v14M134 508h8v4h-8M134 513h12v5h-12M167 508h6v4h-6M165 513h10v5h-10M170.500 506v14M210 508h-8v4h8M210 513h-12v5h12M210.500 506v14" class="lh"/>
<path d="M238 506h14M239 509h5v9h-5" class="lh"/><rect x="246" y="508" width="5" height="6" fill="#ccc"/>
<path d="M270 512h14M271 509h5v7h-5" class="lh"/><rect x="278" y="510" width="6" height="5" fill="#ccc"/>
<path d="M303 520h14M304 510h5v8h-5" class="lh"/><rect x="311" y="511" width="5" height="7" fill="#ccc"/>
<text class="l2" x="127" y="539">Objekte verteilen:</text>
<path d="M132 546h15M132 559h15M135 554h9" class="lh"/><rect x="134" y="548" width="11" height="5" fill="#ccc"/>
<path d="M164 552h16M167 556h10v3h-10" class="lh"/><rect x="167" y="548" width="10" height="4" fill="#ccc"/>
<path d="M196 559h15M199 554h10v4h-10" class="lh"/><rect x="199" y="548" width="10" height="5" fill="#ccc"/>
<path d="M241 546v14M243 548h3v10h-3" class="lh"/><rect x="248" y="550" width="5" height="6" fill="#ccc"/>
<path d="M278 546v14M272 549h3v9h-3M282 549h3v9h-3" class="lh"/><rect x="276" y="550" width="5" height="6" fill="#ccc"/>
<path d="M313 546v14M306 548h5v10h-5" class="lh"/><rect x="302" y="550" width="4" height="6" fill="#ccc"/>
<rect x="129.500" y="568.500" width="11" height="11" fill="#3c3c3c" stroke="#2a2a2a"/>
<text class="l2" x="145" y="578">Abstand verwenden</text>
<use href="#st" x="240" y="568" opacity=".6"/><rect x="254.500" y="568.500" width="47" height="13" fill="#8a8a8a" stroke="#333"/><text x="257" y="578" font-size="10" fill="#6a6a6a">0 mm</text>
<text class="l2" x="179" y="602">Ausrichten an:</text>
<rect x="243" y="590" width="17" height="15" fill="none" stroke="#ccc" stroke-dasharray="1.500 1.500"/><path d="M243 588v18" stroke="#ddd"/><path d="M257 598h5l-2.500 3z" fill="#ddd"/>
<rect x="127" y="614" width="198" height="1" fill="#333"/>
<text class="l2" x="128" y="629">Abstand verteilen:</text>
<path d="M134 642h4M134 646h4" stroke="#ccc"/><rect x="141" y="638" width="6" height="6" fill="#ccc"/><rect x="140.500" y="646.500" width="8" height="5" fill="none" stroke="#ccc"/>
<path d="M169 638v14M173 638v14" stroke="#ccc" stroke-dasharray="3 1"/><rect x="167.500" y="642.500" width="4" height="9" fill="none" stroke="#ccc"/><rect x="175" y="643" width="5" height="6" fill="#ccc"/>
<rect x="130.500" y="660.500" width="11" height="10" fill="#3c3c3c" stroke="#2a2a2a"/><path d="M133 665l3 4 6-11" stroke="#ddd" stroke-width="1.500" fill="none"/>
<text class="l2" x="146" y="669">Abstand verwenden</text>
<use href="#st" x="240" y="658"/><rect x="255.500" y="658.500" width="47" height="13" fill="#999" stroke="#333"/><text x="258" y="669" class="c">8 mm</text>
<rect x="122" y="678" width="208" height="19" fill="#333"/>
<rect x="122" y="678" width="93" height="19" fill="#4a4a4a"/>
<path d="M130 684l-2 3h4zM130 691l-2-3h4z" fill="#ccc"/>
<text x="136" y="692" font-size="11" font-weight="bold" fill="#e0e0e0">Informationen</text>
<path d="M313 686h4l-2 2zM319 684h8M319 687h8M319 690h8" stroke="#ccc" fill="#ccc"/>
<path d="M133 711v10M128 716h10" stroke="#ddd"/><path d="M141 718v3" stroke="#ddd"/>
<text class="l" x="146" y="712">X:0 mm</text><text class="l" x="146" y="724">Y:1,712 mm</text><text class="l" x="146" y="736">D:</text>
<rect x="225" y="700" width="1" height="35" fill="#2e2e2e"/>
<path d="M233 715h11v9M233 715v12h9" fill="none" stroke="#ccc" stroke-dasharray="1.500 1"/>
<text class="l" x="249" y="712">B:5,656 mm</text><text class="l" x="249" y="724">H:2,678 mm</text>
<path d="M246 736l9-7v7z" fill="none" stroke="#ccc"/>
<rect x="127" y="739" width="199" height="1" fill="#333"/>
<text class="l" x="189" y="757">Unicode: 0x18</text>
<rect x="127" y="767" width="199" height="1" fill="#333"/>
<g text-anchor="end"><text class="l" x="232" y="783">Zeichen: 1</text><text class="l" x="232" y="795">Wörter: 1</text><text class="l" x="232" y="807">Zeilen: 1</text><text class="l" x="232" y="819">Absätze: 1</text></g>

<!-- main menu -->
<path d="M329 18H668V635a5 5 0 0 1-5 5H334a5 5 0 0 1-5-5Z" fill="url(#gm)" filter="url(#sh)"/>
<g fill="#d2d7d9">
<rect x="329" y="84" width="339" height="2"/><rect x="329" y="191" width="339" height="2"/><rect x="329" y="241" width="339" height="2"/>
<rect x="329" y="310" width="339" height="2" fill="#e3e4e5"/><rect x="329" y="341" width="339" height="2" fill="#e3e4e5"/><rect x="329" y="391" width="339" height="2" fill="#e3e4e5"/><rect x="329" y="441" width="339" height="2" fill="#e3e4e5"/><rect x="329" y="491" width="339" height="2" fill="#e3e4e5"/><rect x="329" y="522" width="339" height="2" fill="#e3e4e5"/><rect x="329" y="610" width="339" height="2" fill="#e3e4e5"/>
</g>
<rect x="329" y="529" width="339" height="19" fill="#5a90f5"/>
<g>
<text class="m" x="350" y="36">Schriftarten von Typekit hinzufügen...</text>
<text class="m" x="350" y="55">Schriftart</text>
<text class="m" x="350" y="74">Schriftgrad</text>
<text class="m" x="350" y="105">Zeichen</text>
<text class="m" x="350" y="124">Absatz</text>
<text class="m" x="350" y="143">Tabulatoren</text>
<text class="m" x="350" y="162">Glyphen</text>
<text class="m" x="350" y="181">Textabschnitt</text>
<text class="m" x="350" y="212">Zeichenformate</text>
<text class="m" x="350" y="231">Absatzformate</text>
<text class="m" x="350" y="262">In Pfade umwandeln</text>
<text class="m" x="350" y="281">Schriftart suchen...</text>
<text class="m" x="350" y="300">Groß-/Kleinschreibung ändern</text>
<text class="m" x="350" y="331">Pfadtext</text>
<text class="m" x="350" y="362">Notizen</text>
<text class="m" x="350" y="381">Änderungen verfolgen</text>
<text class="m" x="350" y="412">Fußnote einfügen</text>
<text class="m" x="350" y="431">Optionen für Dokumentfußnoten...</text>
<text class="m" x="350" y="462">Hyperlinks und Querverweise</text>
<text class="m" x="350" y="481">Textvariablen</text>
<text class="m" x="350" y="512">Aufzählungs- und nummerierte Listen</text>
<text class="w" x="350" y="543">Sonderzeichen einfügen</text>
<text class="m" x="350" y="562">Leerraum einfügen</text>
<text class="m" x="350" y="581">Umbruchzeichen einfügen</text>
<text class="m" x="350" y="600">Mit Platzhaltertext füllen</text>
<text class="m" x="350" y="631">Verborgene Zeichen einblenden</text>
</g>
<g>
<text class="k" x="652" y="105">⌘T</text>
<text class="k" x="652" y="124">⌥⌘T</text>
<text class="k" x="652" y="143">⇧⌘T</text>
<text class="k" x="661" y="162">⌥⇧<tspan font-size="10.500">F11</tspan></text>
<text class="k" x="661" y="212">⇧⌘<tspan font-size="10.500">F11</tspan></text>
<text class="k" x="661" y="231">⌘<tspan font-size="10.500">F11</tspan></text>
<text class="k" x="654" y="262">⇧⌘O</text>
<text class="k" x="647" y="631">⌥⌘I</text>
</g>
<g fill="#2a2a2a">
<path d="M645 45l7 5-7 5zM645 64l7 5-7 5zM645 290l7 5-7 5zM645 321l7 5-7 5zM645 352l7 5-7 5zM645 371l7 5-7 5zM645 452l7 5-7 5zM645 471l7 5-7 5zM645 502l7 5-7 5zM645 552l7 5-7 5zM645 571l7 5-7 5z"/>
</g>
<path d="M645 533l7 5-7 5z" fill="#fff"/>

<!-- submenu 1 -->
<path d="M673 524H928a5 5 0 0 1 5 5V623a5 5 0 0 1-5 5H668V529a5 5 0 0 1 5-5Z" fill="#f6f6f6" filter="url(#sh)"/>
<rect x="668" y="548" width="265" height="19" fill="#5a90f5"/>
<text class="m" x="689" y="543">Symbole</text>
<text class="w" x="689" y="562">Marken</text>
<text class="m" x="689" y="581">Trenn- und Gedankenstriche</text>
<text class="m" x="689" y="600">Anführungszeichen</text>
<text class="m" x="689" y="619">Andere</text>
<path d="M913 533l7 5-7 5zM913 571l7 5-7 5zM913 590l7 5-7 5zM913 609l7 5-7 5z" fill="#2a2a2a"/>
<path d="M913 552l7 5-7 5z" fill="#fff"/>

<!-- submenu 2 -->
<path d="M938 543H1157a5 5 0 0 1 5 5V642a5 5 0 0 1-5 5H938a5 5 0 0 1-5-5V548a5 5 0 0 1 5-5Z" fill="#f6f6f6" filter="url(#sh)"/>
<rect x="933" y="548" width="229" height="19" fill="#5a90f5"/>
<text class="w" x="954" y="562">Aktuelle Seitenzahl</text>
<text class="k" x="1151" y="562" style="fill:#fff">⌥⇧⌘N</text>
<text class="m" x="954" y="581">Nächste Seitenzahl</text>
<text class="m" x="954" y="600">Vorherige Seitenzahl</text>
<text class="m" x="954" y="619">Abschnittsmarke</text>
<text x="954" y="638" font-size="14.700" fill="#b8b8b8">Fußnotennummer</text>

<!-- menu bar -->
<rect width="1920" height="18" fill="#c6e2ea"/>
<path d="M26 2.500c-1 0-2 .8-2 2 1.200 0 2-1 2-2zM30 5.500c-1.500-1-3-.6-4-.2-1.200-.4-2.800-.6-4 .4-1.700 1.600-1.300 5 .4 7.300.8 1 1.600 1.700 2.600 1.400 1-.3 1.500-.3 2.500 0 1 .3 1.800-.6 2.500-1.600.5-.8.8-1.400 1-2-1.800-.8-2.200-3.800 0-5.300z" fill="#1b1b1b"/>
<text x="53" y="12.500" class="mb" font-weight="bold">InDesign</text>
<text x="133" y="12.500" class="mb">Datei</text>
<text x="186" y="12.500" class="mb">Bearbeiten</text>
<text x="275" y="12.500" class="mb">Layout</text>
<rect x="329" y="0" width="61" height="18" fill="#3f7fe8"/>
<text x="338" y="12.500" class="mb" style="fill:#fff">Schrift</text>
<text x="399" y="12.500" class="mb">Objekt</text>
<text x="461" y="12.500" class="mb">Tabelle</text>
<text x="525" y="12.500" class="mb">Ansicht</text>
<text x="592" y="12.500" class="mb">Fenster</text>
<text x="660" y="12.500" class="mb">Hilfe</text>
<!-- status icons -->
<rect x="1348" y="0" width="16" height="15" fill="#111"/><path d="M1352 7l3 3 5-6" stroke="#fff" stroke-width="1.600" fill="none"/>
<path d="M1376 1h8l5 2v10l-3 2-3-2v-3l-3-2h-4z" fill="#111"/>
<circle cx="1405" cy="7" r="4.500" fill="none" stroke="#111" stroke-width="1.500"/><circle cx="1412" cy="7" r="4.500" fill="none" stroke="#111" stroke-width="1.500"/><path d="M1400 3h17v8h-17" fill="none" stroke="#111" stroke-width="1"/>
<rect x="1430" y="0" width="14" height="15" rx="1.500" fill="none" stroke="#111" stroke-width="1.300"/><path d="M1434 0h6v10l-3-2-3 2z" fill="#111"/>
<path d="M1456 1h17v9h-4M1460 10h-4V1" fill="none" stroke="#111" stroke-width="1.200"/><path d="M1464 8l5 6h-10z" fill="#111"/>
<circle cx="1495" cy="7" r="7" fill="none" stroke="#555" stroke-width="1.200"/><path d="M1495 3v4l3 2" fill="none" stroke="#555"/>
<path d="M1521 3l6 6-3 3V1l3 3-6 6" fill="none" stroke="#555" stroke-width="1.100"/>
<path d="M1546 6a12 12 0 0 1 16 0M1549 9a7.500 7.500 0 0 1 10 0M1552 12a3 3 0 0 1 4 0" fill="none" stroke="#111" stroke-width="1.600"/><circle cx="1554" cy="14.500" r="1" fill="#111"/>
<path d="M1575 5h3l4-4v13l-4-4h-3z" fill="#222"/><path d="M1584 5a4 4 0 0 1 0 5M1587 3a7 7 0 0 1 0 9" fill="none" stroke="#333"/>
<rect x="1607" y="2" width="16" height="4.400" fill="#111"/><rect x="1607" y="6.400" width="16" height="4.400" fill="#d51b1b"/><rect x="1607" y="10.800" width="16" height="4.200" fill="#f0c200"/>
<text x="1636" y="12.500" class="mb" style="font-size:13.500px">99 %</text>
<path d="M1675 2h-4v11h4M1686 2h5v11h-5" fill="none" stroke="#222" stroke-width="1.200"/><path d="M1682 1l-5 7h4l-2 6 6-8h-4l2-5z" fill="#222"/><path d="M1693 5.500v4" stroke="#222" stroke-width="1.200"/>
<text x="1708" y="12.500" class="mb">Mi. 11. Feb.&#160;&#160;07:45</text>
<circle cx="1853" cy="6" r="4.800" fill="none" stroke="#111" stroke-width="1.400"/><path d="M1856.500 10l4 5" stroke="#111" stroke-width="1.500"/>
<path d="M1881 4h15M1881 8.500h15M1881 13h15" stroke="#111" stroke-width="1.500" stroke-dasharray="2 1 12 0"/>
</svg>
</body></html>
